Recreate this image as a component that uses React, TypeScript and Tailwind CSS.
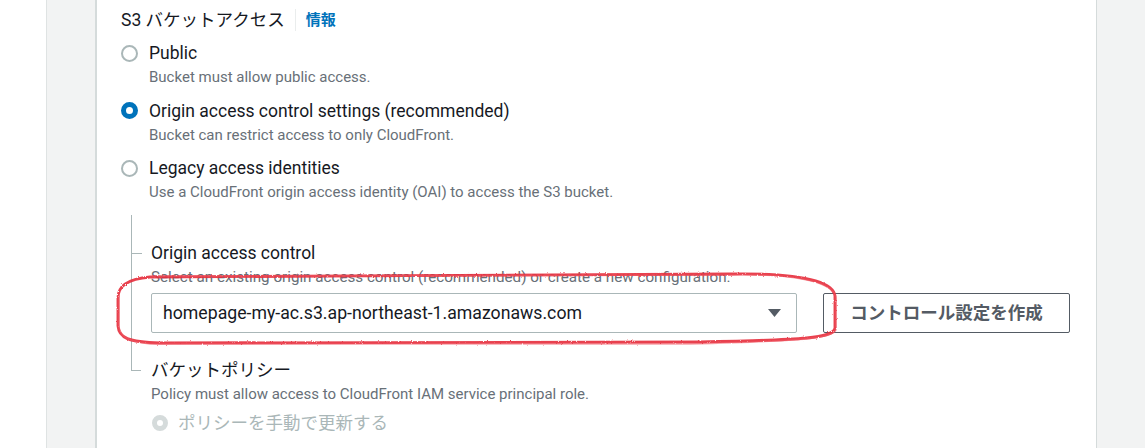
import React from 'react';

const FONT = "font-['Roboto','Noto_Sans_CJK_JP',sans-serif]";

type Option = { id: string; label: string; description: string };

const OPTIONS: Option[] = [
  { id: 'public', label: 'Public', description: 'Bucket must allow public access.' },
  {
    id: 'oac',
    label: 'Origin access control settings (recommended)',
    description: 'Bucket can restrict access to only CloudFront.',
  },
  {
    id: 'oai',
    label: 'Legacy access identities',
    description: 'Use a CloudFront origin access identity (OAI) to access the S3 bucket.',
  },
];

const Radio: React.FC<{ checked?: boolean; disabled?: boolean }> = ({ checked, disabled }) => {
  if (disabled) {
    return <span className="block h-[16px] w-[16px] rounded-full border-[5px] border-[#d5dbdb] bg-white" />;
  }
  if (checked) {
    return <span className="block h-[17px] w-[17px] rounded-full border-[5px] border-[#0073bb] bg-white" />;
  }
  return <span className="block h-[17px] w-[17px] rounded-full border-2 border-[#aab7b8] bg-white" />;
};

const HandDrawnCircle: React.FC = () => (
  // red marker annotation drawn over the screenshot
  <svg className="pointer-events-none absolute left-0 top-0" width="1145" height="448" viewBox="0 0 1145 448">
    <defs>
      <filter id="rough" x="-5%" y="-20%" width="110%" height="140%">
        <feTurbulence type="fractalNoise" baseFrequency="0.8" numOctaves="2" seed="3" result="n" />
        <feDisplacementMap in="SourceGraphic" in2="n" scale="2.2" />
      </filter>
    </defs>
    <g filter="url(#rough)">
      <path
        d="M150 277 C 320 275, 600 276, 730 274 C 790 273, 833 279, 835 296 L 835 328 C 834 338, 805 340, 700 342 L 160 343 C 128 342, 119 338, 118 326 L 118 298 C 118 286, 127 279, 150 277"
        fill="none"
        stroke="#e62e3c"
        strokeWidth="2.9"
        strokeLinecap="round"
        opacity="0.9"
      />
      <path
        d="M152 276 C 330 276, 610 275, 732 275 C 792 274, 834 281, 836 298 L 836 330 C 833 339, 800 341, 690 344 L 150 344 C 126 341, 118 336, 119 322 L 119 296"
        fill="none"
        stroke="#f05a64"
        strokeWidth="1.4"
        opacity="0.55"
      />
    </g>
  </svg>
);

export default function App() {
  return (
    <div className={`relative flex h-[448px] w-[1145px] overflow-hidden bg-white ${FONT}`}>
      <div className="w-[46px] shrink-0 bg-white" />
      <div className="w-[49px] shrink-0 border-l border-[#dfe3e3] bg-[#f2f3f3]" />
      <div className="w-[2px] shrink-0 bg-[#d5dbdb]" />

      <div className="flex w-[999px] shrink-0 flex-col bg-white pl-[24px] pt-[8px]">
        {/* heading */}
        <div className="flex h-[24px] items-center">
          <span className="text-[17.5px] leading-[24px] text-[#16191f]">S3 バケットアクセス</span>
          <span className="ml-[10px] h-[22px] w-px bg-[#eaeded]" />
          <a className="ml-[10px] text-[15px] font-bold leading-[24px] text-[#0073bb]">情報</a>
        </div>

        {/* origin access options */}
        <div className="mt-[9px] flex flex-col gap-[11.5px]">
          {OPTIONS.map((opt) => (
            <div key={opt.id} className="flex gap-[11px]">
              <div className="flex h-[24px] items-center">
                <Radio checked={opt.id === 'oac'} />
              </div>
              <div className="flex flex-col">
                <span className="text-[17.5px] leading-[24px] text-[#16191f]">{opt.label}</span>
                <span className="mt-[2px] text-[15px] leading-[20px] text-[#687078]">{opt.description}</span>
              </div>
            </div>
          ))}
        </div>

        {/* nested settings */}
        <div className="ml-[10px] mt-[13px] flex flex-col">
          <div className="flex">
            <div className="w-[20px] shrink-0 border-l border-[#aab7b8]">
              <div className="mt-[38px] w-[10px] border-t border-[#aab7b8]" />
            </div>
            <div className="flex flex-col pb-[25px] pt-[26px]">
              <span className="text-[17.5px] leading-[24px] text-[#16191f]">Origin access control</span>
              <span className="mt-[2px] text-[15.2px] leading-[20px] text-[#687078]">
                Select an existing origin access control (recommended) or create a new configuration.
              </span>
              <div className="mt-[6px] flex gap-[26px]">
                <div className="flex h-[40px] w-[646px] items-center justify-between rounded-[2px] border border-[#aab7b8] bg-white pl-[11px] pr-[15px]">
                  <span className="text-[17.7px] text-[#16191f]">homepage-my-ac.s3.ap-northeast-1.amazonaws.com</span>
                  <svg width="13" height="8" viewBox="0 0 13 8">
                    <path d="M0 0 H13 L6.5 8 Z" fill="#545b64" />
                  </svg>
                </div>
                <button className="flex h-[40px] w-[247px] items-center justify-center rounded-[2px] border border-[#545b64] bg-white text-[17.5px] font-bold text-[#545b64]">
                  コントロール設定を作成
                </button>
              </div>
            </div>
          </div>

          <div className="flex">
            <div className="w-[20px] shrink-0">
              <div className="h-[13px] w-[10px] border-b border-l border-[#aab7b8]" />
            </div>
            <div className="flex flex-col">
              <span className="text-[17.5px] leading-[24px] text-[#16191f]">バケットポリシー</span>
              <span className="mt-[2px] text-[15px] leading-[20px] text-[#687078]">
                Policy must allow access to CloudFront IAM service principal role.
              </span>
              <div className="mt-[7px] flex items-center gap-[10px] pl-px">
                <Radio disabled />
                <span className="text-[17.5px] leading-[24px] text-[#aab7b8]">ポリシーを手動で更新する</span>
              </div>
            </div>
          </div>
        </div>
      </div>

      <div className="w-px shrink-0 bg-[#d5dbdb]" />
      <div className="flex-1 bg-[#f2f3f3]" />

      <HandDrawnCircle />
    </div>
  );
}
